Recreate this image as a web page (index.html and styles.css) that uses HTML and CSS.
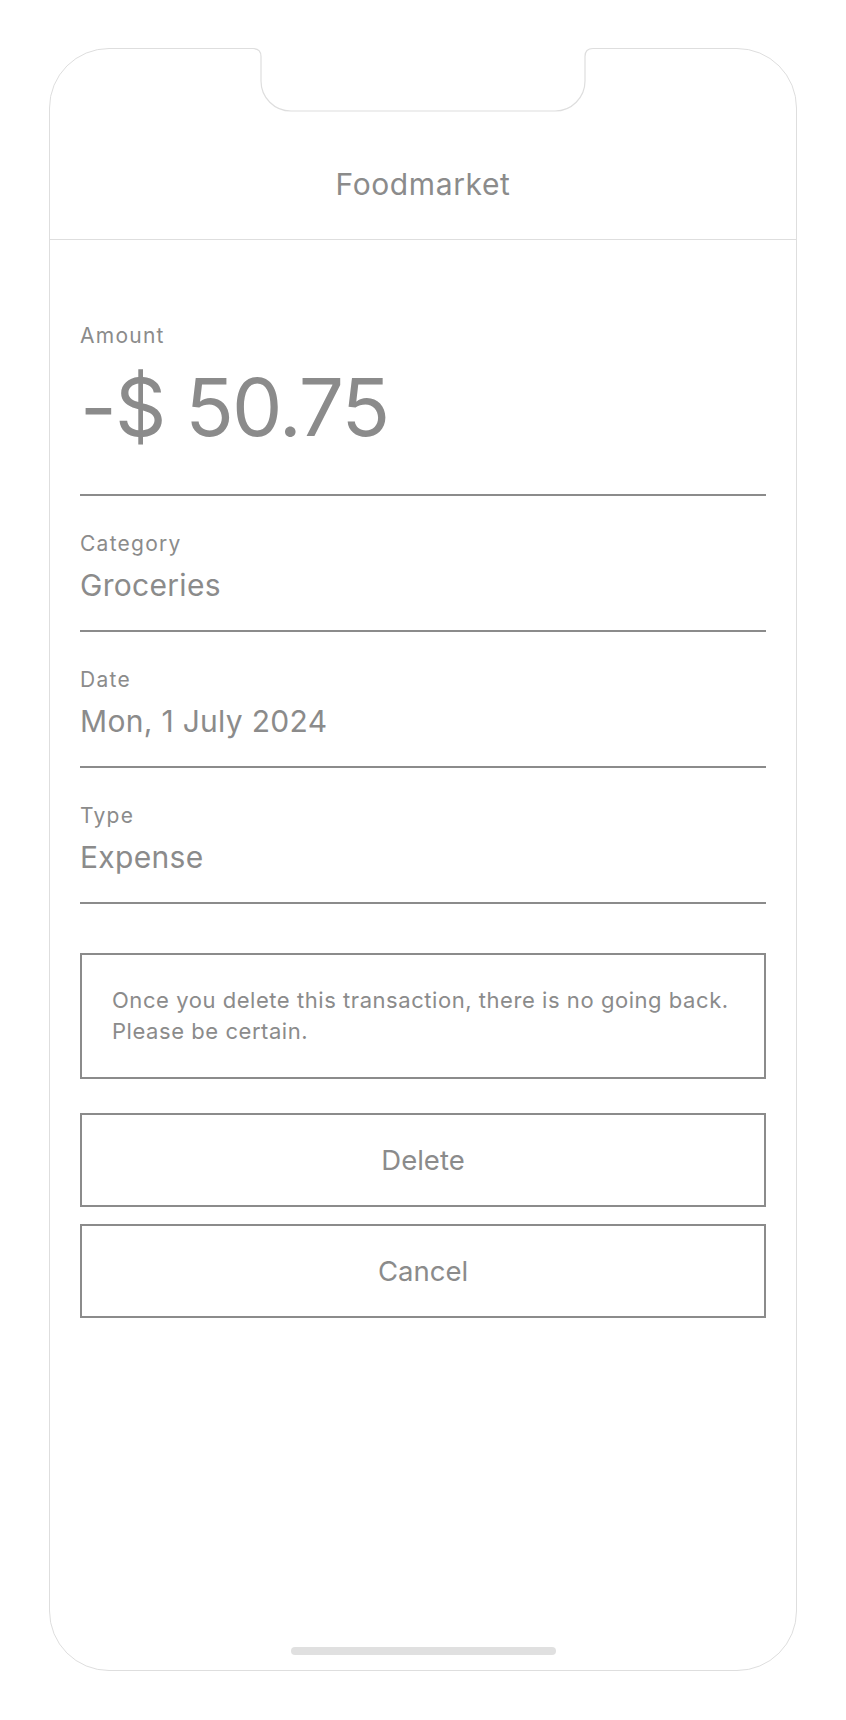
FILE: index.html
```html
<!DOCTYPE html>
<html lang="en">
<head>
<meta charset="utf-8">
<title>Foodmarket</title>
<link rel="stylesheet" href="styles.css">
</head>
<body>
<div class="phone">
  <svg class="notch" width="340" height="64" viewBox="0 0 340 64" aria-hidden="true">
    <path class="notch-fill" d="M0 -1 H340 V0.5 Q332 0.5 332 8.5 V33 A30 30 0 0 1 302 63 H38 A30 30 0 0 1 8 33 V8.5 Q8 0.5 0 0.5 Z"/>
    <path class="notch-line" d="M0 0.5 Q8 0.5 8 8.5 V33 A30 30 0 0 0 38 63 H302 A30 30 0 0 0 332 33 V8.5 Q332 0.5 340 0.5"/>
  </svg>
  <header class="topbar">
    <h1 class="title">Foodmarket</h1>
  </header>
  <main class="content">
    <section class="field field-amount">
      <div class="label">Amount</div>
      <div class="amount">-$ 50.75</div>
    </section>
    <section class="field">
      <div class="label">Category</div>
      <div class="value">Groceries</div>
    </section>
    <section class="field">
      <div class="label">Date</div>
      <div class="value">Mon, 1 July 2024</div>
    </section>
    <section class="field">
      <div class="label">Type</div>
      <div class="value">Expense</div>
    </section>
    <div class="warning">
      <p>Once you delete this transaction, there is no going back.<br>Please be certain.</p>
    </div>
    <div class="actions">
      <button class="btn" type="button">Delete</button>
      <button class="btn" type="button">Cancel</button>
    </div>
  </main>
  <div class="home-indicator"></div>
</div>
</body>
</html>
```
FILE: styles.css
```css
* { box-sizing: border-box; }

html, body {
  margin: 0;
  background: #ffffff;
}

body {
  padding: 48px 49px 49px;
  font-family: "Inter", "Liberation Sans", sans-serif;
  color: #8b8b8b;
}

.phone {
  position: relative;
  width: 748px;
  height: 1623px;
  border: 1px solid #dedede;
  border-radius: 60px;
  display: flex;
  flex-direction: column;
  background: #fff;
}

.notch {
  position: absolute;
  top: -1px;
  left: 50%;
  margin-left: -170px;
  overflow: visible;
}

.notch-fill { fill: #fff; stroke: none; }
.notch-line { fill: none; stroke: #dedede; stroke-width: 1.2; }

.topbar {
  height: 191px;
  border-bottom: 1px solid #dedede;
  display: flex;
  align-items: flex-end;
  justify-content: center;
  padding-bottom: 37px;
}

.title {
  margin: 0;
  font-size: 30px;
  line-height: 36px;
  font-weight: 400;
  letter-spacing: 0.6px;
  color: #8b8b8b;
}

.content {
  padding: 0 30px;
  display: flex;
  flex-direction: column;
}

.field {
  display: flex;
  flex-direction: column;
  padding: 36px 0 27px;
  border-bottom: 2px solid #8b8b8b;
}

.field-amount {
  padding: 84px 0 47px;
}

.label {
  font-size: 21px;
  line-height: 24px;
  letter-spacing: 0.06em;
}

.value {
  margin-top: 11px;
  font-size: 30px;
  line-height: 36px;
  letter-spacing: 0.3px;
}

.amount {
  margin-top: 19px;
  font-size: 80px;
  line-height: 80px;
  letter-spacing: -1.8px;
}

.warning {
  margin-top: 49px;
  border: 2px solid #8b8b8b;
  padding: 30px 30px;
}

.warning p {
  margin: 0;
  font-size: 22px;
  line-height: 31px;
  letter-spacing: 0.55px;
}

.actions {
  margin-top: 34px;
  display: flex;
  flex-direction: column;
  gap: 17px;
}

.btn {
  height: 94px;
  border: 2px solid #8b8b8b;
  background: #fff;
  font-family: inherit;
  font-size: 27.5px;
  color: #8b8b8b;
  padding: 0;
}

.home-indicator {
  margin-top: auto;
  margin-bottom: 15px;
  align-self: center;
  width: 265px;
  height: 8px;
  border-radius: 4px;
  background: #e0e0e0;
}
```
